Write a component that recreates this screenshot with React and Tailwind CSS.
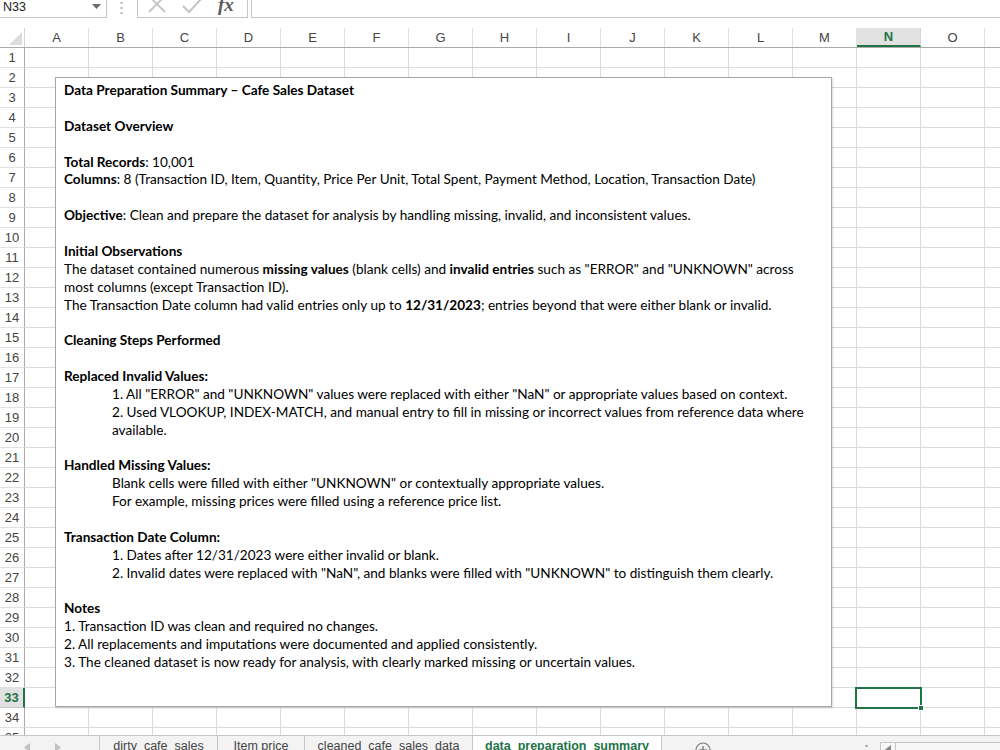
import React from "react";

const COLS = ["A","B","C","D","E","F","G","H","I","J","K","L","M","N","O",""];
const ROWS = Array.from({ length: 35 }, (_, i) => i + 1);

const B = ({ children }) => <span className="font-bold">{children}</span>;

const LINES = [
  { c: <B>Data Preparation Summary – Cafe Sales Dataset</B> },
  {},
  { c: <B>Dataset Overview</B> },
  {},
  { c: <><B>Total Records</B>: 10,001</> },
  { c: <><B>Columns</B>: 8 (Transaction ID, Item, Quantity, Price Per Unit, Total Spent, Payment Method, Location, Transaction Date)</> },
  {},
  { c: <><B>Objective</B>: Clean and prepare the dataset for analysis by handling missing, invalid, and inconsistent values.</> },
  {},
  { c: <B>Initial Observations</B> },
  { c: <>The dataset contained numerous <B>missing values</B> (blank cells) and <B>invalid entries</B> such as "ERROR" and "UNKNOWN" across</> },
  { c: <>most columns (except Transaction ID).</> },
  { c: <>The Transaction Date column had valid entries only up to <B>12/31/2023</B>; entries beyond that were either blank or invalid.</> },
  {},
  { c: <B>Cleaning Steps Performed</B> },
  {},
  { c: <B>Replaced Invalid Values:</B> },
  { i: true, c: <>1. All "ERROR" and "UNKNOWN" values were replaced with either "NaN" or appropriate values based on context.</> },
  { i: true, c: <>2. Used VLOOKUP, INDEX-MATCH, and manual entry to fill in missing or incorrect values from reference data where</> },
  { i: true, c: <>available.</> },
  {},
  { c: <B>Handled Missing Values:</B> },
  { i: true, c: <>Blank cells were filled with either "UNKNOWN" or contextually appropriate values.</> },
  { i: true, c: <>For example, missing prices were filled using a reference price list.</> },
  {},
  { c: <B>Transaction Date Column:</B> },
  { i: true, c: <>1. Dates after 12/31/2023 were either invalid or blank.</> },
  { i: true, c: <>2. Invalid dates were replaced with "NaN", and blanks were filled with "UNKNOWN" to distinguish them clearly.</> },
  {},
  { c: <B>Notes</B> },
  { c: <>1. Transaction ID was clean and required no changes.</> },
  { c: <>2. All replacements and imputations were documented and applied consistently.</> },
  { c: <>3. The cleaned dataset is now ready for analysis, with clearly marked missing or uncertain values.</> },
];

function FormulaBar() {
  return (
    <div className="h-[19px] flex shrink-0 bg-white">
      <div className="relative w-[107px] shrink-0 h-[18px] border-r border-b border-[#c6c6c6]">
        <span className="absolute left-[3px] top-0 text-[12.5px] leading-[14px] text-[#222]">N33</span>
        <svg className="absolute left-[92px] top-[4px]" width="9" height="5" viewBox="0 0 9 5">
          <polygon points="0,0 9,0 4.5,5" fill="#6d6d6d" />
        </svg>
      </div>
      <div className="w-[30px] shrink-0 h-[18px] relative">
        <svg className="absolute left-[13px] top-[1px]" width="3" height="14" viewBox="0 0 3 14">
          <rect x="0.5" y="1" width="2" height="2" fill="#b5b5b5" />
          <rect x="0.5" y="6" width="2" height="2" fill="#b5b5b5" />
          <rect x="0.5" y="11" width="2" height="2" fill="#b5b5b5" />
        </svg>
      </div>
      <div className="relative w-[111px] shrink-0 h-[18px] border-l border-r border-b border-[#c6c6c6]">
        <svg className="absolute left-[10px] top-[-5px]" width="18" height="18" viewBox="0 0 18 18">
          <line x1="1" y1="1" x2="17" y2="17" stroke="#c4c4c4" strokeWidth="1.8" />
          <line x1="17" y1="1" x2="1" y2="17" stroke="#c4c4c4" strokeWidth="1.8" />
        </svg>
        <svg className="absolute left-[44px] top-[-3px]" width="21" height="17" viewBox="0 0 21 17">
          <polyline points="1,9 7,15 20,1" fill="none" stroke="#c4c4c4" strokeWidth="2" />
        </svg>
        <span className="absolute left-[80px] top-[-5px] text-[19px] leading-[20px] italic font-bold text-[#5a5a5a]" style={{ fontFamily: '"Liberation Serif", serif' }}>fx</span>
      </div>
      <div className="w-[3px] shrink-0" />
      <div className="flex-1 h-[18px] border-l border-b border-[#c6c6c6]" />
    </div>
  );
}

function HeaderRow() {
  return (
    <div className="flex h-[20px] shrink-0 border-b border-[#ababab]">
      <div className="relative w-[25px] shrink-0 h-full border-r border-[#d4d4d4]">
        <svg className="absolute left-[9px] top-[4px]" width="13" height="13" viewBox="0 0 13 13">
          <polygon points="13,0 13,13 0,13" fill="#dcdcdc" />
        </svg>
      </div>
      {COLS.map((c, i) => {
        const sel = c === "N";
        return (
          <div
            key={i}
            className={
              sel
                ? "w-[64px] shrink-0 h-full border-r border-[#d4d4d4] bg-[#e1e1e1] border-b-2 border-b-[#217346] text-[#217346] font-bold flex items-center justify-center text-[13px]"
                : "w-[64px] shrink-0 h-full border-r border-[#e1e1e1] text-[#444] flex items-center justify-center text-[13px]"
            }
          >
            {c}
          </div>
        );
      })}
    </div>
  );
}

function GridRow({ n }) {
  const sel = n === 33;
  return (
    <div className="flex h-[20px] shrink-0">
      <div
        className={
          sel
            ? "w-[25px] shrink-0 h-full bg-[#e1e1e1] border-r-2 border-r-[#217346] border-b border-b-[#c6c6c6] text-[#217346] font-bold text-[13px] flex items-center justify-center"
            : "w-[25px] shrink-0 h-full border-r border-r-[#ababab] border-b border-b-[#e1e1e1] text-[#444] text-[13px] flex items-center justify-center"
        }
      >
        {n}
      </div>
      {COLS.map((c, i) => (
        <div key={i} className="w-[64px] shrink-0 h-full border-r border-b border-[#dadada]" />
      ))}
    </div>
  );
}

function TabBar() {
  return (
    <div className="h-[15px] shrink-0 overflow-hidden bg-[#f3f3f3] border-t border-[#c6c6c6] flex relative">
      <div className="w-[100px] shrink-0 h-[20px] relative border-r border-[#c6c6c6]">
        <svg className="absolute left-[24px] top-[7px]" width="6" height="9" viewBox="0 0 6 9">
          <polygon points="6,0 6,9 0,4.5" fill="#c0c0c0" />
        </svg>
        <svg className="absolute left-[55px] top-[7px]" width="6" height="9" viewBox="0 0 6 9">
          <polygon points="0,0 0,9 6,4.5" fill="#c0c0c0" />
        </svg>
      </div>
      <div className="w-[118px] shrink-0 h-[20px] border-r border-[#c6c6c6] flex items-start justify-center pt-[2px] text-[12.5px] leading-[16px] text-[#444]">dirty_cafe_sales</div>
      <div className="w-[87px] shrink-0 h-[20px] border-r border-[#c6c6c6] flex items-start justify-center pt-[2px] text-[12.5px] leading-[16px] text-[#444]">Item price</div>
      <div className="w-[167px] shrink-0 h-[20px] flex items-start justify-center pt-[2px] text-[12.5px] leading-[16px] text-[#444]">cleaned_cafe_sales_data</div>
      <div className="w-[190px] shrink-0 h-[20px] mt-[-1px] bg-white border-l border-r border-[#c6c6c6] flex items-start justify-center pt-[3px] text-[12.5px] leading-[16px] font-bold text-[#217346]">data_preparation_summary</div>
      <div className="w-[218px] shrink-0 h-[20px] relative">
        <svg className="absolute left-[33px] top-[6px]" width="16" height="16" viewBox="0 0 16 16">
          <circle cx="8" cy="8" r="7" fill="none" stroke="#7a7a7a" strokeWidth="1.2" />
          <line x1="8" y1="4" x2="8" y2="12" stroke="#7a7a7a" strokeWidth="1.4" />
          <line x1="4" y1="8" x2="12" y2="8" stroke="#7a7a7a" strokeWidth="1.4" />
        </svg>
        <svg className="absolute left-[203px] top-[8px]" width="3" height="10" viewBox="0 0 3 10">
          <rect x="0.5" y="1" width="2" height="2" fill="#9a9a9a" />
          <rect x="0.5" y="6" width="2" height="2" fill="#9a9a9a" />
        </svg>
      </div>
      <div className="flex-1 h-[20px] mt-[6px] border-l border-t border-[#c6c6c6] bg-[#f7f7f7] flex">
        <div className="w-[15px] h-full border-r border-[#c6c6c6] relative">
          <svg className="absolute left-[4px] top-[2px]" width="6" height="9" viewBox="0 0 6 9">
            <polygon points="6,0 6,9 0,4.5" fill="#8a8a8a" />
          </svg>
        </div>
      </div>
    </div>
  );
}

export default function App() {
  return (
    <div
      className="w-[1000px] h-[750px] overflow-hidden bg-white flex flex-col relative"
      style={{ fontFamily: '"Liberation Sans", Arial, sans-serif' }}
    >
      <FormulaBar />
      <div className="h-[9px] shrink-0" />
      <HeaderRow />
      <div className="flex-1 overflow-hidden flex flex-col">
        {ROWS.map((n) => (
          <GridRow key={n} n={n} />
        ))}
      </div>
      <TabBar />

      {/* selected cell N33 */}
      <div className="absolute left-[855px] top-[687px] w-[67px] h-[22px] border-2 border-[#217346]">
        <div className="absolute right-[-4px] bottom-[-4px] w-[6px] h-[6px] bg-[#217346] border border-white" />
      </div>

      {/* floating text box */}
      <div
        className="absolute left-[55px] top-[77px] w-[777px] h-[630px] bg-white border border-[#a6a6a6] shadow-[1px_1px_2px_rgba(0,0,0,0.15)] pl-[8px] pt-[4px] text-black text-[13.6px] leading-[17.875px]"
        style={{ fontFamily: 'Lato, "Liberation Sans", sans-serif' }}
      >
        {LINES.map((l, idx) => (
          <div key={idx} className={l.i ? "pl-[48px] whitespace-nowrap h-[17.875px]" : "whitespace-nowrap h-[17.875px]"}>
            {l.c || "\u00a0"}
          </div>
        ))}
      </div>
    </div>
  );
}
